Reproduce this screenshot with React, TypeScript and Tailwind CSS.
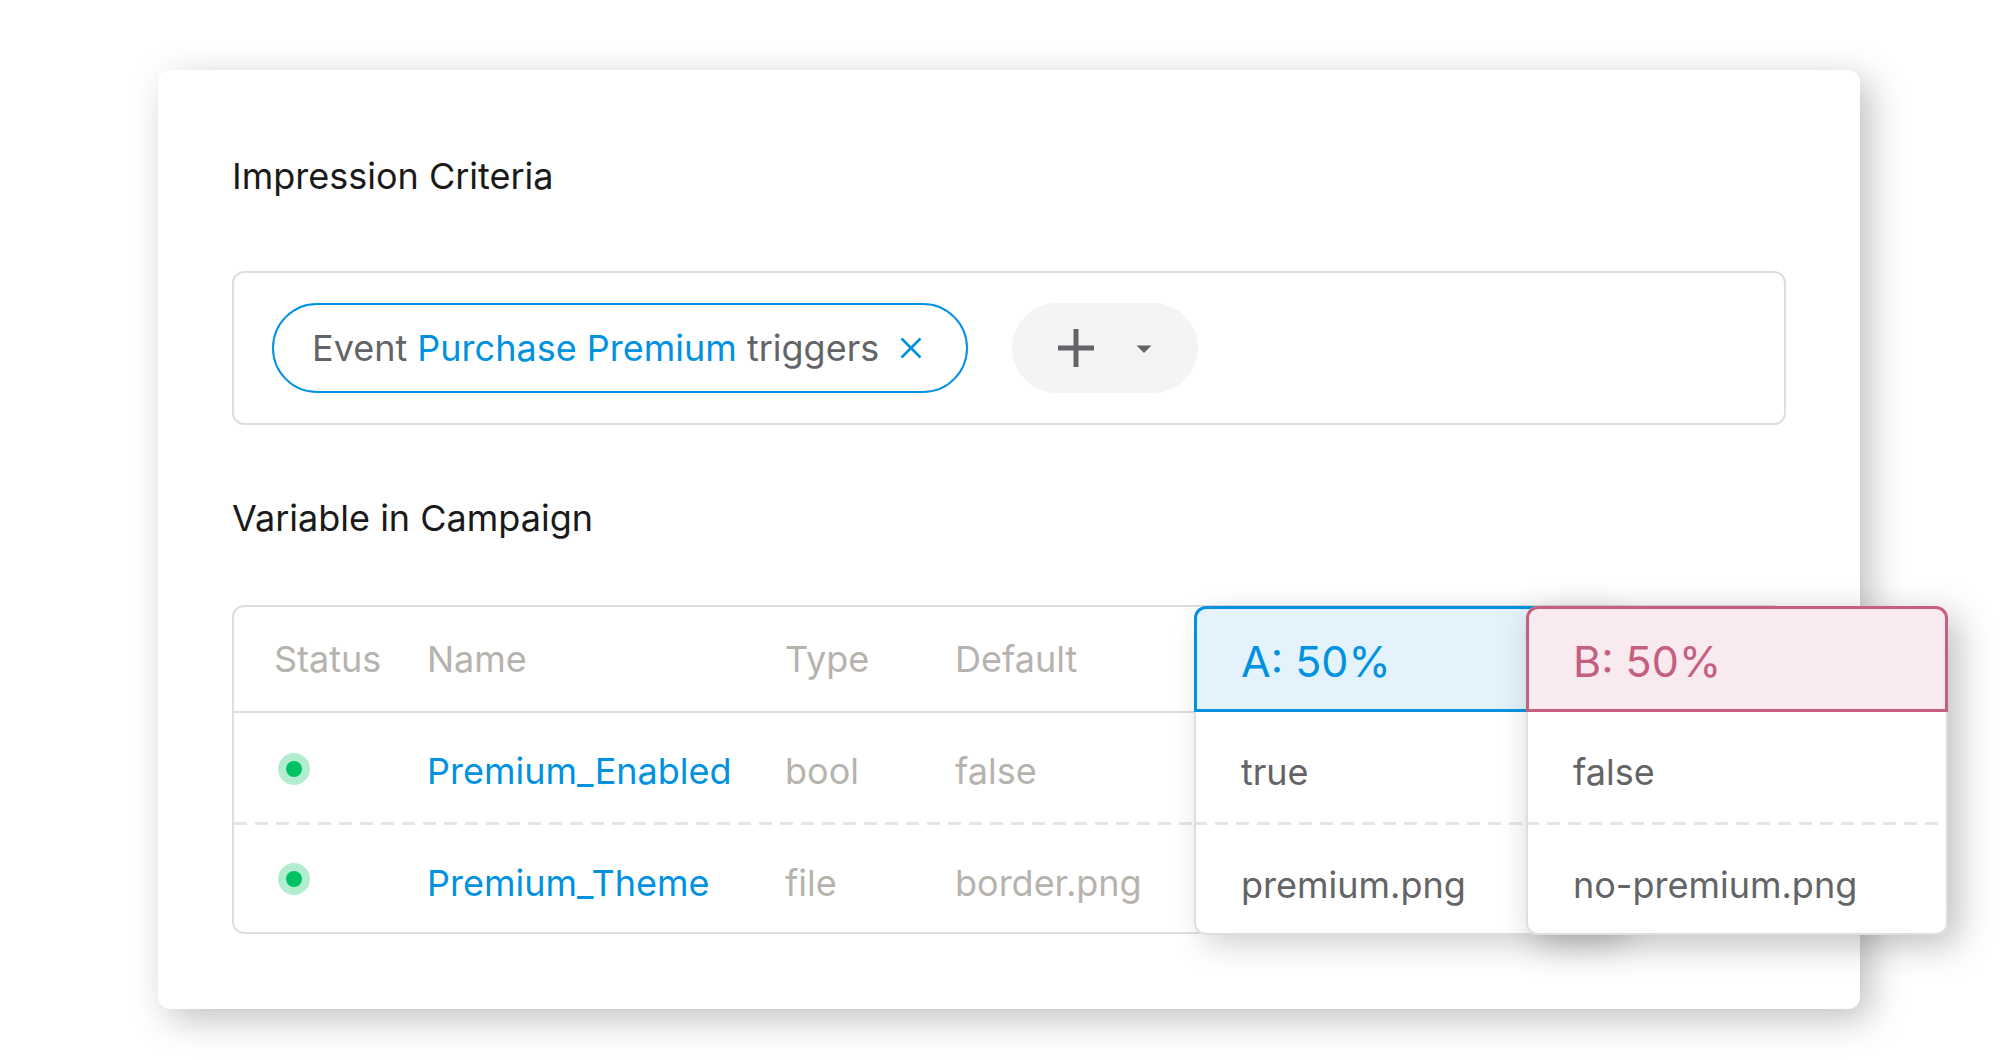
import { ReactNode } from "react"
import clsx from "clsx"

type Variable = {
  name: string
  type: string
  fallback: string
}

const variables: Variable[] = [
  { name: "Premium_Enabled", type: "bool", fallback: "false" },
  { name: "Premium_Theme", type: "file", fallback: "border.png" },
]

// Dashed rule drawn along the bottom edge of a table row
const dashedRow =
  "bg-[linear-gradient(90deg,#e5e5e5_13px,transparent_13px)] bg-[length:21px_3px] bg-repeat-x bg-left-bottom"

function StatusDot() {
  return (
    <span
      role="img"
      aria-label="Active"
      className="flex size-8 items-center justify-center rounded-full bg-[#b3edd0]"
    >
      <span className="size-4 rounded-full bg-[#00c163]" />
    </span>
  )
}

function SectionTitle({ children }: { children: ReactNode }) {
  return <h2 className="text-4xl leading-11 text-[#1a1a1a]">{children}</h2>
}

function CriteriaBox() {
  return (
    <div className="mt-[73px] flex items-center gap-11 rounded-xl border-2 border-[#dedede] px-[38px] py-[30px]">
      <div className="flex h-[90px] items-center gap-[21px] rounded-full border-2 border-[#0092e1] pr-11 pl-[38px] text-4xl leading-11 whitespace-nowrap text-[#636467]">
        <span>
          Event <span className="text-[#0092e1]">Purchase Premium</span> triggers
        </span>
        <button type="button" aria-label="Remove criterion" className="text-[#0092e1]">
          <svg width="22" height="22" viewBox="0 0 22 22" fill="none" stroke="currentColor" strokeWidth="2.6">
            <path d="M1.5 1.5l19 19M20.5 1.5l-19 19" />
          </svg>
        </button>
      </div>
      <button
        type="button"
        aria-label="Add criterion"
        className="flex h-[90px] w-[186px] items-center justify-between rounded-full bg-[#f4f4f4] pr-[46px] pl-[45px] text-[#636467]"
      >
        <svg width="38" height="38" viewBox="0 0 38 38" fill="none" stroke="currentColor" strokeWidth="5">
          <path d="M19 0v38M1 19h36" />
        </svg>
        <svg width="16" height="10" viewBox="0 0 16 10" fill="currentColor">
          <path d="M0.5 2.5h15L8 10z" />
        </svg>
      </button>
    </div>
  )
}

function VariationCard({
  title,
  values,
  headClass,
  className,
}: {
  title: string
  values: string[]
  headClass: string
  className: string
}) {
  return (
    <table
      className={clsx(
        "absolute top-px w-[422px] border-separate border-spacing-0 rounded-xl bg-white text-left",
        className
      )}
    >
      <thead>
        <tr>
          <th
            scope="col"
            className={clsx(
              "h-[106px] rounded-t-xl border-[3px] pt-1 pl-11 text-[43px] leading-11 font-normal",
              headClass
            )}
          >
            {title}
          </th>
        </tr>
      </thead>
      <tbody>
        {values.map((value, i) => (
          <tr key={value} className={clsx(i < values.length - 1 && dashedRow)}>
            <td
              className={clsx(
                "border-x-2 border-[#dedede] pt-[38px] pl-[45px] align-top text-4xl leading-11 text-[#636467]",
                i < values.length - 1 ? "h-[113px]" : "h-[110px] rounded-b-xl border-b-2"
              )}
            >
              {value}
            </td>
          </tr>
        ))}
      </tbody>
    </table>
  )
}

function VariableTable() {
  return (
    <div className="relative mt-[65px]">
      <div className="rounded-xl border-2 border-[#dedede]">
        <table className="w-full table-fixed border-separate border-spacing-0 text-left text-4xl leading-11 text-[#b6b3ae]">
          <colgroup>
            <col className="w-[193px]" />
            <col className="w-[358px]" />
            <col className="w-[170px]" />
            <col />
          </colgroup>
          <thead>
            <tr>
              <th scope="col" className="h-[106px] border-b-2 border-[#dedede] pl-10 font-normal">
                Status
              </th>
              <th scope="col" className="border-b-2 border-[#dedede] font-normal">
                Name
              </th>
              <th scope="col" className="border-b-2 border-[#dedede] font-normal">
                Type
              </th>
              <th scope="col" className="border-b-2 border-[#dedede] font-normal">
                Default
              </th>
            </tr>
          </thead>
          <tbody>
            {variables.map((v, i) => (
              <tr key={v.name} className={clsx(i < variables.length - 1 && dashedRow)}>
                <td className={clsx("pl-11 align-middle", i < variables.length - 1 ? "h-28" : "h-[107px]")}>
                  <StatusDot />
                </td>
                <td className="pt-9 align-top">
                  <a href="#" className="text-[#0092e1]">
                    {v.name}
                  </a>
                </td>
                <td className="pt-9 align-top">{v.type}</td>
                <td className="pt-9 align-top">{v.fallback}</td>
              </tr>
            ))}
          </tbody>
        </table>
      </div>

      {/* Variation columns float above the table, B on top of A */}
      <VariationCard
        title="A: 50%"
        values={["true", "premium.png"]}
        headClass="border-[#0092e1] bg-[#e4f3fb] text-[#0092e1]"
        className="right-[170px] shadow-[10px_10px_32px_rgba(0,0,0,0.18)]"
      />
      <VariationCard
        title="B: 50%"
        values={["false", "no-premium.png"]}
        headClass="border-[#c55f80] bg-[#f8eaee] text-[#c55f80]"
        className="-right-[162px] shadow-[10px_10px_36px_rgba(0,0,0,0.26)]"
      />
    </div>
  )
}

export default function App() {
  return (
    <div className="min-h-screen bg-white pt-[70px] pr-[140px] pb-[51px] pl-[158px] font-[Inter,sans-serif]">
      <main className="rounded-xl bg-white px-[74px] pt-[84px] pb-[75px] shadow-[10px_10px_36px_rgba(0,0,0,0.25)]">
        <section>
          <SectionTitle>Impression Criteria</SectionTitle>
          <CriteriaBox />
        </section>
        <section className="mt-[71px]">
          <SectionTitle>Variable in Campaign</SectionTitle>
          <VariableTable />
        </section>
      </main>
    </div>
  )
}
